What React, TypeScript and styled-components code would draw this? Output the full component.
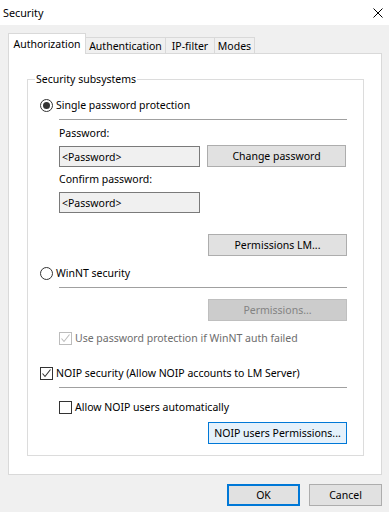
import styled, { createGlobalStyle } from 'styled-components';

const GlobalStyle = createGlobalStyle`
    html, body {
        margin: 0;
        padding: 0;
        background: #f0f0f0;
    }
    * {
        box-sizing: border-box;
    }
`;

const font = `"Noto Sans", "Liberation Sans", sans-serif`;

const Window = styled.div`
    width: 389px;
    height: 512px;
    background: #f0f0f0;
    font-family: ${font};
    font-size: 10.5px;
    color: #000;
    display: flex;
    flex-direction: column;
    overflow: hidden;
`;

const TitleBar = styled.div`
    height: 25px;
    background: #fff;
    display: flex;
    align-items: center;
    justify-content: space-between;
    padding: 0 6px 0 3px;
`;

const Title = styled.span`
    font-size: 10.8px;
    line-height: 16px;
`;

const Body = styled.div`
    padding: 8px 7px 0 8px;
    display: flex;
    flex-direction: column;
`;

const TabStrip = styled.div`
    display: flex;
    align-items: flex-end;
    height: 21px;
    margin-bottom: -1px;
    position: relative;
    z-index: 1;
`;

const Tab = styled.div<{ $active?: boolean; $w: number }>`
    width: ${(p) => p.$w}px;
    height: ${(p) => (p.$active ? 21 : 16)}px;
    margin-bottom: ${(p) => (p.$active ? 0 : 1)}px;
    background: ${(p) => (p.$active ? '#fff' : '#f0f0f0')};
    border: 1px solid #d9d9d9;
    border-bottom: none;
    border-left: ${(p) => (p.$active ? '1px solid #d9d9d9' : 'none')};
    display: flex;
    align-items: center;
    justify-content: center;
    line-height: 14px;
    padding-top: ${(p) => (p.$active ? 0 : 1)}px;
    white-space: nowrap;
`;

const Panel = styled.div`
    height: 422px;
    background: #fff;
    border: 1px solid #d9d9d9;
    padding: 25px 17px 0 18px;
`;

const Group = styled.div`
    position: relative;
    height: 377px;
    border: 1px solid #dcdcdc;
    padding: 0 16px 0 12px;
    display: flex;
    flex-direction: column;
`;

const GroupLabel = styled.span`
    position: absolute;
    top: -9px;
    left: 7px;
    padding: 0 1px;
    background: #fff;
    line-height: 16px;
`;

const OptionRow = styled.label<{ $mt: number; $indent?: boolean; $disabled?: boolean }>`
    display: flex;
    align-items: center;
    gap: 3px;
    height: 16px;
    margin-top: ${(p) => p.$mt}px;
    margin-left: ${(p) => (p.$indent ? 19 : 0)}px;
    color: ${(p) => (p.$disabled ? '#6d6d6d' : '#000')};
    white-space: nowrap;
`;

const RadioMark = styled.span<{ $checked?: boolean }>`
    width: 13px;
    height: 13px;
    border-radius: 50%;
    border: 1px solid #333;
    display: flex;
    align-items: center;
    justify-content: center;
    flex: none;

    &::after {
        content: '';
        width: 7px;
        height: 7px;
        border-radius: 50%;
        background: ${(p) => (p.$checked ? '#333' : 'transparent')};
    }
`;

const CheckMark = styled.span<{ $disabled?: boolean }>`
    width: 13px;
    height: 13px;
    border: 1px solid ${(p) => (p.$disabled ? '#bcbcbc' : '#333')};
    background: #fff;
    display: flex;
    align-items: center;
    justify-content: center;
    flex: none;
`;

const Separator = styled.div<{ $mt: number }>`
    height: 1px;
    margin-top: ${(p) => p.$mt}px;
    margin-left: 19px;
    background: #a0a0a0;
`;

const FieldLabel = styled.div<{ $mt: number }>`
    height: 16px;
    line-height: 16px;
    margin-top: ${(p) => p.$mt}px;
    margin-left: 19px;
`;

const FieldRow = styled.div<{ $mt: number }>`
    display: grid;
    grid-template-columns: 141px 139px;
    column-gap: 7px;
    align-items: start;
    margin-top: ${(p) => p.$mt}px;
    margin-left: 19px;
`;

const TextBox = styled.div<{ $offset?: number }>`
    height: 21px;
    margin-top: ${(p) => p.$offset ?? 0}px;
    background: #f0f0f0;
    border: 1px solid #7a7a7a;
    display: flex;
    align-items: center;
    padding-left: 2px;
    line-height: 14px;
`;

const ButtonRow = styled.div<{ $mt: number }>`
    display: flex;
    justify-content: flex-end;
    margin-top: ${(p) => p.$mt}px;
`;

type BtnKind = 'normal' | 'disabled' | 'hot' | 'default';

const btnBg: Record<BtnKind, string> = {
    normal: '#e1e1e1',
    disabled: '#cccccc',
    hot: '#e5f1fb',
    default: '#e1e1e1',
};

const btnBorder: Record<BtnKind, string> = {
    normal: '1px solid #adadad',
    disabled: '1px solid #bfbfbf',
    hot: '1px solid #0078d7',
    default: '2px solid #0078d7',
};

const Button = styled.div<{ $kind?: BtnKind; $w: number }>`
    width: ${(p) => p.$w}px;
    height: 22px;
    background: ${(p) => btnBg[p.$kind ?? 'normal']};
    border: ${(p) => btnBorder[p.$kind ?? 'normal']};
    color: ${(p) => (p.$kind === 'disabled' ? '#838383' : '#000')};
    display: flex;
    align-items: center;
    justify-content: center;
    line-height: 14px;
    white-space: nowrap;
`;

const Footer = styled.div`
    display: flex;
    justify-content: flex-end;
    gap: 9px;
    margin-top: 9px;
`;

const Check = ({ color }: { color: string }) => (
    <svg width="11" height="11" viewBox="0 0 11 11">
        <path d="M1.5 5.5 L4 8.5 L9.5 1.5" fill="none" stroke={color} strokeWidth="1.1" />
    </svg>
);

const CloseIcon = () => (
    <svg width="10" height="10" viewBox="0 0 10 10">
        <path d="M0.5 0.5 L9.5 9.5 M9.5 0.5 L0.5 9.5" stroke="#000" strokeWidth="1" />
    </svg>
);

const App = () => (
    <Window>
        <GlobalStyle />
        <TitleBar>
            <Title>Security</Title>
            <CloseIcon />
        </TitleBar>
        <Body>
            <TabStrip>
                <Tab $active $w={78}>Authorization</Tab>
                <Tab $w={80}>Authentication</Tab>
                <Tab $w={49}>IP-filter</Tab>
                <Tab $w={40}>Modes</Tab>
            </TabStrip>
            <Panel>
                <Group>
                    <GroupLabel>Security subsystems</GroupLabel>

                    <OptionRow $mt={17}>
                        <RadioMark $checked />
                        Single password protection
                    </OptionRow>
                    <Separator $mt={6} />
                    <FieldLabel $mt={5}>Password:</FieldLabel>
                    <FieldRow $mt={4}>
                        <TextBox $offset={1}>&lt;Password&gt;</TextBox>
                        <Button $w={139}>Change password</Button>
                    </FieldRow>
                    <FieldLabel $mt={4}>Confirm password:</FieldLabel>
                    <FieldRow $mt={5}>
                        <TextBox>&lt;Password&gt;</TextBox>
                    </FieldRow>
                    <ButtonRow $mt={21}>
                        <Button $w={139}>Permissions LM...</Button>
                    </ButtonRow>

                    <OptionRow $mt={9}>
                        <RadioMark />
                        WinNT security
                    </OptionRow>
                    <Separator $mt={6} />
                    <ButtonRow $mt={11}>
                        <Button $w={139} $kind="disabled">Permissions...</Button>
                    </ButtonRow>
                    <OptionRow $mt={9} $indent $disabled>
                        <CheckMark $disabled>
                            <Check color="#bcbcbc" />
                        </CheckMark>
                        Use password protection if WinNT auth failed
                    </OptionRow>

                    <OptionRow $mt={19}>
                        <CheckMark>
                            <Check color="#333" />
                        </CheckMark>
                        NOIP security (Allow NOIP accounts to LM Server)
                    </OptionRow>
                    <Separator $mt={6} />
                    <OptionRow $mt={11} $indent>
                        <CheckMark />
                        Allow NOIP users automatically
                    </OptionRow>
                    <ButtonRow $mt={7}>
                        <Button $w={139} $kind="hot">NOIP users Permissions...</Button>
                    </ButtonRow>
                </Group>
            </Panel>
            <Footer>
                <Button $w={73} $kind="default">OK</Button>
                <Button $w={73}>Cancel</Button>
            </Footer>
        </Body>
    </Window>
);

export default App;
